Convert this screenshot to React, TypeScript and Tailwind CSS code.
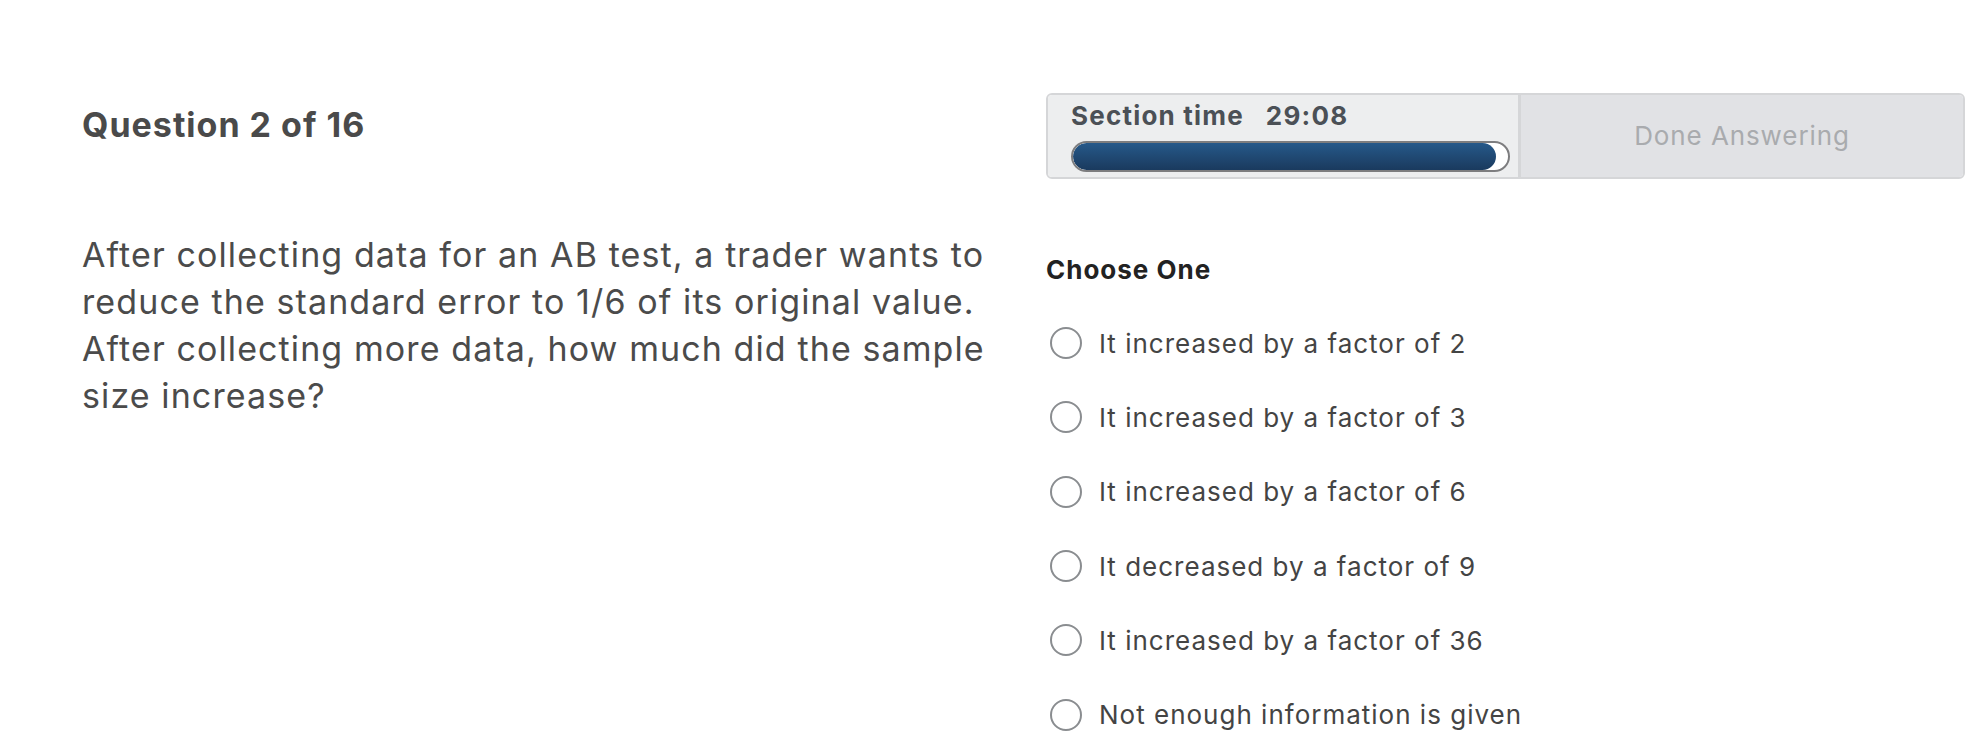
import React from "react";

const options = [
  "It increased by a factor of 2",
  "It increased by a factor of 3",
  "It increased by a factor of 6",
  "It decreased by a factor of 9",
  "It increased by a factor of 36",
  "Not enough information is given",
];

export default function App() {
  return (
    <div className="w-[1986px] h-[740px] overflow-hidden bg-white font-['Inter',sans-serif] flex pl-[82px]">
      <div className="w-[920px] pt-[104px] shrink-0">
        <h1 className="text-[34px] leading-[42px] font-bold text-[#4a4a4a] tracking-[1px]">Question 2 of 16</h1>
        <p className="mt-[85px] text-[34px] leading-[47px] text-[#4b4b4b] tracking-[1.1px] pr-[10px]">
          After collecting data for an AB test, a trader wants to reduce the standard error to 1/6 of its original value. After collecting more data, how much did the sample size increase?
        </p>
      </div>
      <div className="ml-[44px] w-[919px] pt-[93px] shrink-0">
        <div className="h-[86px] flex rounded-[6px] border-2 border-[#d5d6d8] overflow-hidden">
          <div className="w-[470px] bg-[#edeeef] pl-[23px] pt-[3px] shrink-0">
            <div className="text-[26px] leading-[36px] font-bold text-[#4b5056] tracking-[1.2px] flex gap-[22px]">
              <span>Section time</span>
              <span>29:08</span>
            </div>
            <div className="mt-[7px] w-[439px] h-[31px] rounded-full border-2 border-[#7d7d7f] bg-white overflow-hidden">
              <div className="h-full w-[423px] rounded-full bg-gradient-to-b from-[#26598a] to-[#1a3a5e]" />
            </div>
          </div>
          <div className="w-[3px] bg-[#d5d6d8] shrink-0" />
          <div className="flex-1 bg-[#e1e2e5] flex items-center justify-center pb-[2px]">
            <span className="text-[26px] tracking-[0.9px] text-[#a9abae]">Done Answering</span>
          </div>
        </div>
        <div className="mt-[75px] text-[26px] leading-[32px] font-bold text-[#222222] tracking-[1px]">Choose One</div>
        <div className="mt-[20px] flex flex-col">
          {options.map((o) => (
            <label key={o} className="h-[74.3px] flex items-center gap-[17px] pl-[4px]">
              <span className="w-[32px] h-[32px] rounded-full border-2 border-[#8a8d90] bg-white shrink-0" />
              <span className="text-[26px] text-[#444444] tracking-[1px]">{o}</span>
            </label>
          ))}
        </div>
      </div>
    </div>
  );
}
